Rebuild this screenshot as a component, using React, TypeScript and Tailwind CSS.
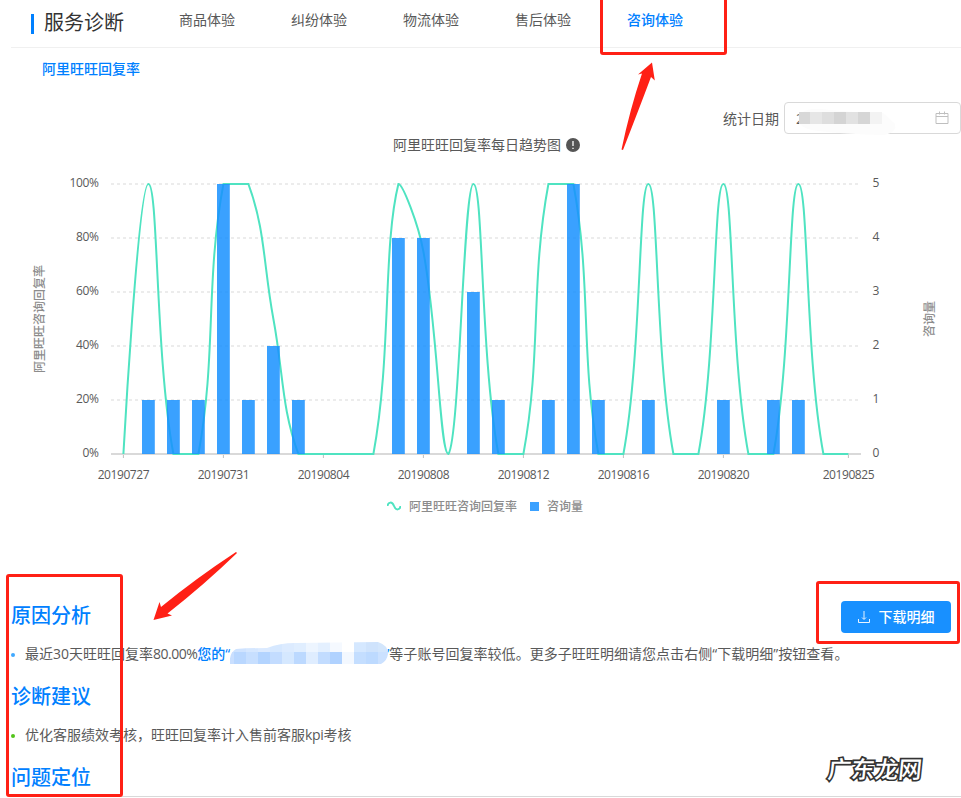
import { Fragment } from 'react';

const tabs = ['商品体验', '纠纷体验', '物流体验', '售后体验', '咨询体验'];

// one entry per day, 20190727 - 20190825
const replyRate = [0, 100, 0, 0, 100, 100, 50, 0, 0, 0, 0, 100, 75, 0, 100, 0, 0, 100, 100, 0, 0, 100, 0, 0, 100, 0, 0, 100, 0, 0];
const consults = [0, 1, 1, 1, 5, 1, 2, 1, 0, 0, 0, 4, 4, 0, 3, 1, 0, 1, 5, 1, 0, 1, 0, 0, 1, 0, 1, 1, 0, 0];

const xLabels = [
  { i: 0, text: '20190727' },
  { i: 4, text: '20190731' },
  { i: 8, text: '20190804' },
  { i: 12, text: '20190808' },
  { i: 16, text: '20190812' },
  { i: 20, text: '20190816' },
  { i: 24, text: '20190820' },
  { i: 29, text: '20190825' },
];

const TOP = 24;
const BOTTOM = 294;
const px = (i: number) => 123.4 + i * 25;
const py = (rate: number) => BOTTOM - (rate / 100) * (BOTTOM - TOP);
const clampY = (y: number) => Math.min(BOTTOM, Math.max(TOP, y));

function smoothPath(values: number[]) {
  const pts = values.map((v, i) => [px(i), py(v)]);
  const ctrl = pts.map((p, i) => {
    const prev = pts[i - 1];
    const next = pts[i + 1];
    if (!prev || !next) return { before: p, after: p };
    const vx = (next[0] - prev[0]) * 0.4;
    const vy = (next[1] - prev[1]) * 0.4;
    const d0 = Math.hypot(p[0] - prev[0], p[1] - prev[1]);
    const d1 = Math.hypot(p[0] - next[0], p[1] - next[1]);
    const a = d0 / (d0 + d1);
    const b = d1 / (d0 + d1);
    return {
      before: [p[0] - vx * a, clampY(p[1] - vy * a)],
      after: [p[0] + vx * b, clampY(p[1] + vy * b)],
    };
  });
  let d = `M${pts[0][0]},${pts[0][1]}`;
  for (let i = 1; i < pts.length; i++) {
    d += ` C${ctrl[i - 1].after} ${ctrl[i].before} ${pts[i]}`;
  }
  return d;
}

function TrendChart() {
  return (
    <svg width="961" height="330" viewBox="0 0 961 330" className="block shrink-0">
      {[0, 1, 2, 3, 4, 5].map((n) => {
        const y = BOTTOM - n * 54;
        return (
          <Fragment key={n}>
            {n > 0 && <line x1="111" x2="859" y1={y} y2={y} stroke="#ececec" strokeWidth="2" strokeDasharray="3 3" />}
            <text x="98.7" y={y + 3} textAnchor="end" className="fill-[#595959] text-[12px] tracking-[-0.35px]">{n * 20}%</text>
            <text x="872.5" y={y + 3} className="fill-[#595959] text-[12px]">{n}</text>
          </Fragment>
        );
      })}
      <line x1="111" x2="861" y1={BOTTOM} y2={BOTTOM} stroke="#d9d9d9" strokeWidth="2" />
      {xLabels.map(({ i, text }) => (
        <Fragment key={text}>
          <line x1={px(i)} x2={px(i)} y1="295" y2="298" stroke="#bfbfbf" />
          <text x={px(i)} y="319" textAnchor="middle" className="fill-[#595959] text-[12px] tracking-[-0.42px]">{text}</text>
        </Fragment>
      ))}
      <path d={smoothPath(replyRate)} fill="none" stroke="#4fe3c1" strokeWidth="2" />
      {consults.map((c, i) => c > 0 && (
        <rect key={i} x={px(i) - 6.4} y={BOTTOM - c * 54} width="12.8" height={c * 54} fill="#1890ff" fillOpacity="0.85" />
      ))}
      <text transform="translate(44 159) rotate(-90)" textAnchor="middle" className="fill-[#8c8c8c] text-[12px] font-medium">阿里旺旺咨询回复率</text>
      <text transform="translate(934 159) rotate(-90)" textAnchor="middle" className="fill-[#8c8c8c] text-[12px] font-medium">咨询量</text>
    </svg>
  );
}

const upperCells = ['#d3e5ff', '#cfe3ff', '#d5e7ff', '#dbeaff', '#d6e8ff', '#dcebff', '#e0eeff', '#edf5ff', '#e4f0ff', '#f5f9ff', '#ffffff', '#d5e8ff', '#cfe3fc', '#d3e6fc'];
const lowerCells = ['#c9dfff', '#b9d7ff', '#c7dfff', '#b3d4ff', '#c3dcff', '#d5e8ff', '#bcd9ff', '#dfedff', '#c2dcff', '#b0d2ff', '#f3f8ff', '#c4deff', '#bddaff', '#cbe1ff'];

function MaskedAccounts() {
  return (
    <svg width="158" height="22" className="absolute top-[-1px] left-[33px]">
      <clipPath id="smudge">
        <path d="M0 21 Q-1 11 6 7 Q20 6 37 6 Q50 1 65 1 L148 0 Q158 3 158 12 Q157 19 151 22 L0 22 Z" />
      </clipPath>
      <g clipPath="url(#smudge)">
        {upperCells.map((c, i) => <rect key={i} x={i * 12 - 8} width="12" height="11" fill={c} />)}
        {lowerCells.map((c, i) => <rect key={i} x={i * 12 - 8} y="10" width="12" height="12" fill={c} />)}
      </g>
    </svg>
  );
}

function DateInput() {
  return (
    <div className="relative flex h-8 w-[177px] items-center justify-between rounded-[4px] border border-[#d9d9d9] pr-[11px] pl-[11px] text-[14px] text-[#595959]">
      <span>2</span>
      <svg width="100" height="30" className="absolute top-[4px] left-[14px]">
        <path d="M2 6 Q10 1 22 2 Q60 6 84 6 L96 17 Q98 26 84 28 Q45 27 20 24 Q6 23 1 17 Z" fill="#fcfcfc" />
        {['#d8d8d8', '#e6e6e6', '#dedede', '#d4d4d4', '#e2e2e2', '#d6d6d6', '#f3f3f3'].map((c, i) => (
          <rect key={i} x={i * 12 - 1} y="5" width="12" height="12" fill={c} />
        ))}
      </svg>
      <svg width="14" height="14" viewBox="0 0 14 14" fill="none" stroke="#bfbfbf" className="relative">
        <path d="M1 2.5h12v10H1zM1 5.5h12M4.5 0.5v3M9.5 0.5v3" />
      </svg>
    </div>
  );
}

export default function App() {
  return (
    <div className="relative flex h-[798px] w-[961px] flex-col overflow-hidden bg-white font-['Open_Sans','Noto_Sans_CJK_SC',sans-serif] text-[14px] text-[#595959]">
      <header className="ml-[11px] flex h-12 shrink-0 border-b border-[#f0f0f0] pl-5">
        <div className="mt-[14px] h-5 w-[3px] bg-[#0080ff]" />
        <h1 className="mt-[8px] ml-[10px] w-20 text-[20px] leading-[30px] text-[#333]">服务诊断</h1>
        <nav className="mt-[10px] ml-[55px] flex gap-14 leading-5">
          {tabs.map((tab, i) => (
            <span key={tab} className={i === 4 ? 'font-medium text-[#0080ff]' : ''}>{tab}</span>
          ))}
        </nav>
      </header>

      <h2 className="mt-[11px] ml-[42px] text-[14px] leading-5 font-medium text-[#0080ff]">阿里旺旺回复率</h2>

      <div className="mt-[23px] flex items-center justify-end gap-[5px]">
        <span>统计日期</span>
        <DateInput />
      </div>

      <div className="mt-[1px] flex h-5 items-center gap-[5px] pl-[393px]">
        <span className="leading-5">阿里旺旺回复率每日趋势图</span>
        <svg width="14" height="14" viewBox="0 0 14 14">
          <circle cx="7" cy="7" r="7" fill="#555" />
          <path d="M7 3v5M7 9.7v1.3" stroke="#fff" strokeWidth="1.3" />
        </svg>
      </div>

      <div className="mt-[5px]">
        <TrendChart />
      </div>

      <div className="mt-[6px] flex h-5 items-center pl-[387px] text-[12px] text-[#8c8c8c]">
        <svg width="14" height="10" viewBox="0 0 14 10" fill="none" stroke="#4fe3c1" strokeWidth="2">
          <path d="M0.5 5 C1 1 5 0 7 5 S13 9 13.5 5" />
        </svg>
        <span className="mt-px ml-[8px] font-medium">阿里旺旺咨询回复率</span>
        <span className="ml-[13px] h-[9px] w-[9px] bg-[#3ba1ff]" />
        <span className="mt-px ml-[8px] font-medium">咨询量</span>
      </div>

      <section className="mt-[85px] pr-[10px] pl-[11px]">
        <div className="flex h-8 items-center justify-between">
          <h3 className="mb-[2px] text-[20px] leading-[30px] font-medium text-[#0080ff]">原因分析</h3>
          <button className="flex h-8 w-[110px] items-center justify-center gap-[9px] rounded-[4px] bg-[#1890ff] text-white">
            <svg width="12" height="12" viewBox="0 0 12 12" fill="none" stroke="white" className="opacity-90">
              <path d="M6 0v8M4 6.5L6 8.5l2-2M0.5 8v3.5h11V8" />
            </svg>
            <span className="mb-[2px] font-medium">下载明细</span>
          </button>
        </div>
        <div className="mt-[10px] flex h-[21px] items-center whitespace-nowrap">
          <span className="mt-[3px] mr-[10px] h-[4px] w-[4px] rounded-full bg-[#40a9ff]" />
          <span>最近30天旺旺回复率<span className="tracking-[-0.5px]">80.00%</span></span>
          <span className="relative inline-flex h-[21px] w-[192px] items-center font-medium text-[#0080ff]">
            您的“<span className="absolute top-0 right-0">”</span>
            <MaskedAccounts />
          </span>
          <span className="tracking-[0.04px]">等子账号回复率较低。更多子旺旺明细请您点击右侧“下载明细”按钮查看。</span>
        </div>
        <h3 className="mt-[18px] text-[20px] leading-[30px] font-medium text-[#0080ff]">诊断建议</h3>
        <div className="mt-[12px] flex h-[21px] items-center">
          <span className="mt-[3px] mr-[10px] h-[4px] w-[4px] rounded-full bg-[#52c41a]" />
          <span>优化客服绩效考核，旺旺回复率计入售前客服<span className="tracking-[-0.3px]">kpi</span>考核</span>
        </div>
        <h3 className="mt-[18px] text-[20px] leading-[30px] font-medium text-[#0080ff]">问题定位</h3>
      </section>
      <div className="mt-[3px] ml-[11px] h-px shrink-0 bg-[#d9d9d9]" />

      {/* callouts */}
      <div className="absolute top-[-4px] left-[600px] h-[59px] w-[127px] rounded-[3px] border-3 border-[#ff2015]" />
      <div className="absolute top-[574px] left-[6px] h-[223px] w-[117px] rounded-[3px] border-3 border-[#ff2015]" />
      <div className="absolute top-[581px] left-[816px] h-[63px] w-[144px] rounded-[3px] border-3 border-[#ff2015]" />
      <svg width="40" height="92" className="absolute top-[60px] left-[618px]" fill="#ff2015">
        <path d="M34 2.5L36.8 20.5L33 17Q21 49 5 90L3.5 89.5Q12 49 24 13.5L20 14.5Z" />
      </svg>
      <svg width="90" height="74" className="absolute top-[549px] left-[151px]" fill="#ff2015">
        <path d="M2.5 71L8.5 53L10 58Q44 30 85 3L86 4Q54 35 16.5 64.5L21 66.5Z" />
      </svg>
      <div className="absolute top-[751px] left-[828px] -skew-x-6 text-[23.5px] leading-9 font-medium text-white [-webkit-text-stroke:3.4px_#333] [paint-order:stroke_fill]">广东龙网</div>
    </div>
  );
}
